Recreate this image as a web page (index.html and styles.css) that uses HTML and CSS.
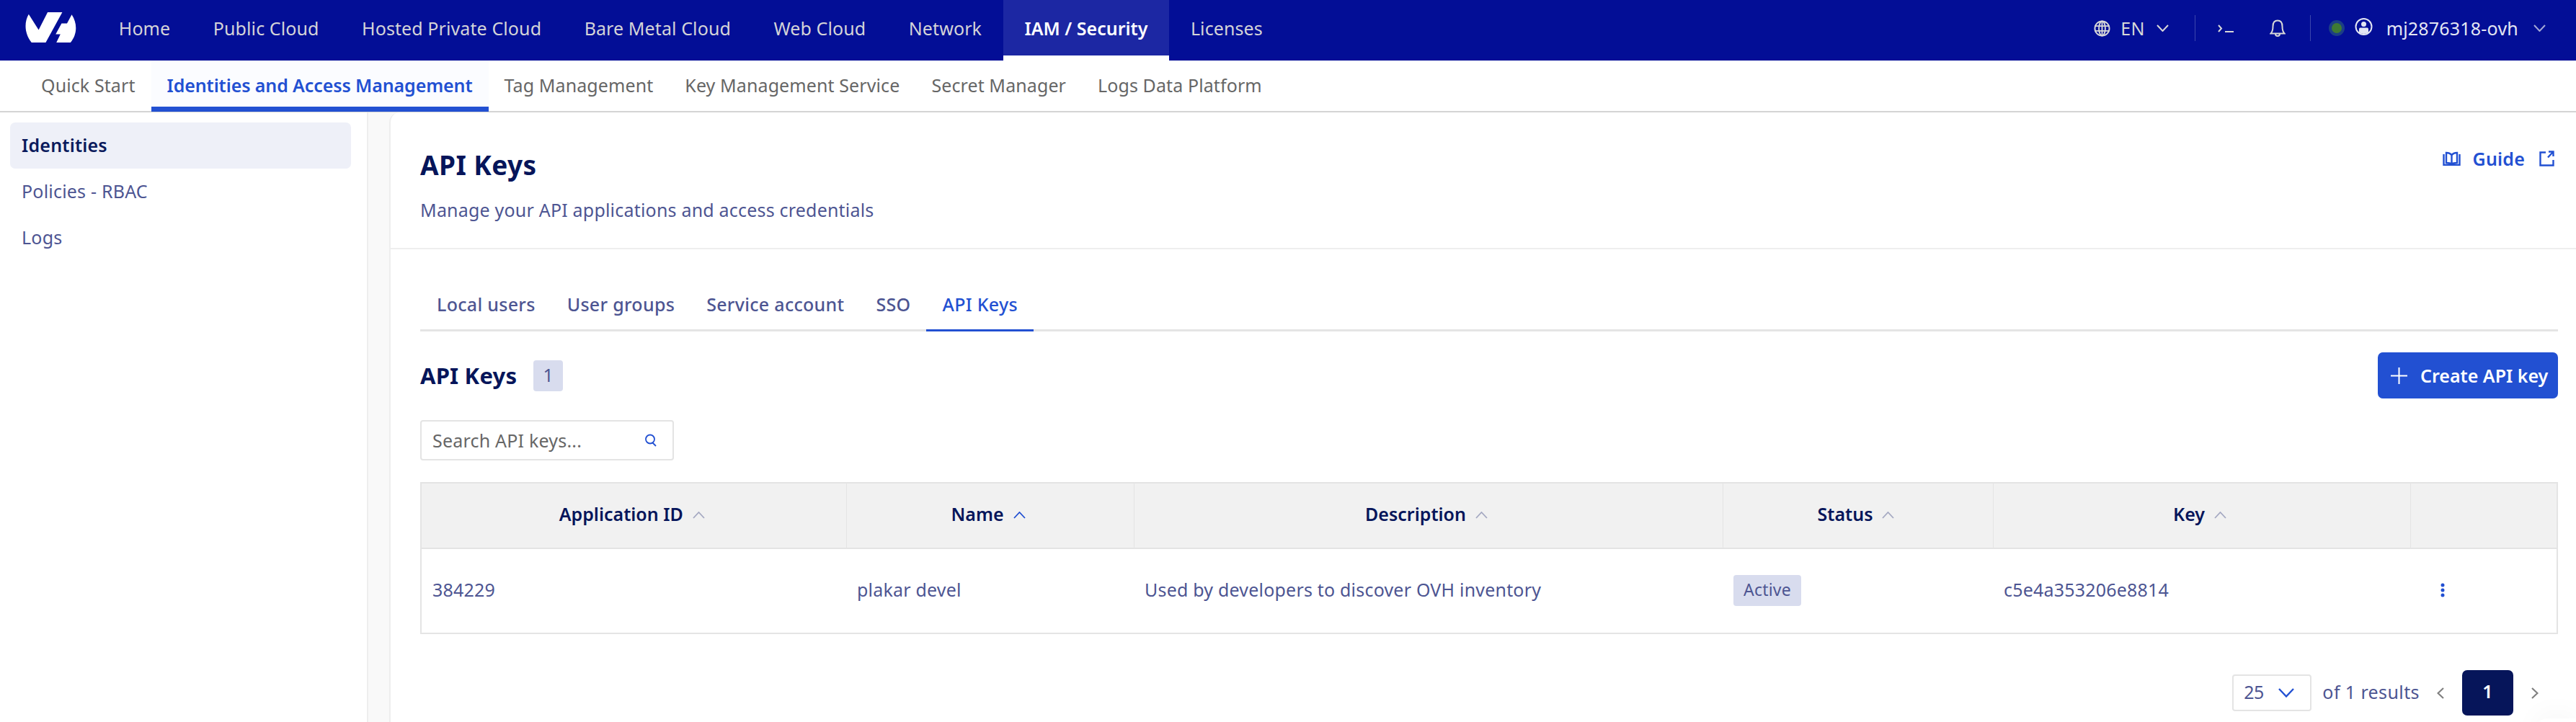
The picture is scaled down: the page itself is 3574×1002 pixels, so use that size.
FILE: index.html
```html
<!DOCTYPE html>
<html lang="en">
<head>
<meta charset="utf-8">
<title>API Keys</title>
<link rel="stylesheet" href="styles.css">
</head>
<body>
<header class="topbar">
  <svg class="logo" viewBox="105 50 213 128" fill="#fff"><path d="M118 58C98 92 100 140 130 178H190L260 50H198L160 125Z"/><path d="M235 178H295C322 145 326 100 300 60L280 97H257L232 143H252Z"/></svg>
  <nav class="topnav">
    <a class="topnav-item">Home</a>
    <a class="topnav-item">Public Cloud</a>
    <a class="topnav-item">Hosted Private Cloud</a>
    <a class="topnav-item">Bare Metal Cloud</a>
    <a class="topnav-item">Web Cloud</a>
    <a class="topnav-item">Network</a>
    <a class="topnav-item topnav-active">IAM / Security</a>
    <a class="topnav-item">Licenses</a>
  </nav>
  <div class="tools">
    <svg class="ico-globe" viewBox="0 0 24 24" fill="none" stroke="#d8d8d8" stroke-width="2"><circle cx="12" cy="12" r="10.5"/><ellipse cx="12" cy="12" rx="4.6" ry="10.5"/><path d="M1.5 8.5H22.5M1.5 15.5H22.5M12 1.5V22.5"/></svg>
    <span class="lang">EN</span>
    <svg class="chev-top chev-lang" viewBox="0 0 17 10" fill="none" stroke="#d8d8d8" stroke-width="2"><path d="M1 1L8.500 9L16 1"/></svg>
    <span class="tool-sep"></span>
    <svg class="ico-term" viewBox="0 0 22 11" fill="none" stroke="#d8d8d8" stroke-width="2"><path d="M1 1L5 5.500L1 10M10 10H22"/></svg>
    <svg class="ico-bell" viewBox="0 0 22 24" fill="none" stroke="#d8d8d8" stroke-width="2"><path d="M1.500 19.500C4 17 4.500 15 4.500 9.500C4.500 4.500 7 1.500 11 1.500S17.500 4.500 17.500 9.500C17.500 15 18 17 20.500 19.500ZM8 20C8 24 14 24 14 20"/></svg>
    <span class="tool-sep sep-2"></span>
    <span class="status-dot"></span>
    <svg class="ico-user" viewBox="0 0 25 24"><circle cx="12.500" cy="12" r="11" fill="none" stroke="#e3e6f3" stroke-width="2"/><circle cx="12.500" cy="8.500" r="3.500" fill="#e3e6f3"/><path d="M6 20V15.500C6 14 7 13.500 8 13.500H17C18 13.500 19 14 19 15.500V20C15 22.500 10 22.500 6 20Z" fill="#e3e6f3"/></svg>
    <span class="username">mj2876318-ovh</span>
    <svg class="chev-top chev-dim" viewBox="0 0 17 10" fill="none" stroke="#a4a9d6" stroke-width="2"><path d="M1 1L8.500 9L16 1"/></svg>
  </div>
</header>
<nav class="subnav">
  <a class="subnav-item">Quick Start</a>
  <a class="subnav-item subnav-active">Identities and Access Management</a>
  <a class="subnav-item">Tag Management</a>
  <a class="subnav-item">Key Management Service</a>
  <a class="subnav-item">Secret Manager</a>
  <a class="subnav-item">Logs Data Platform</a>
</nav>
<div class="layout">
  <aside class="sidebar">
    <a class="side-item side-active">Identities</a>
    <a class="side-item">Policies - RBAC</a>
    <a class="side-item">Logs</a>
  </aside>
  <main class="content">
    <section class="card">
      <div class="page-head">
        <div>
          <h1 class="page-title">API Keys</h1>
          <p class="page-sub">Manage your API applications and access credentials</p>
        </div>
        <a class="guide">
          <svg class="ico-book" viewBox="0 0 25 20" fill="none" stroke="#2250d2" stroke-width="2.400"><path d="M1.500 4V19H23.500V4M5 2C8 2 11 3 12.500 5.500C14 3 17 2 20 2V16C17 16 14 16.500 12.500 18C11 16.500 8 16 5 16ZM12.500 5.500V18"/></svg>
          <span class="guide-text">Guide</span>
          <svg class="ico-ext" viewBox="0 0 21 22" fill="none" stroke="#2250d2" stroke-width="2.400"><path d="M9 2.500H1.500V20.500H19.500V13M12 9.500L19.500 1.500M13 1.500H19.500V8"/></svg>
        </a>
      </div>
      <div class="panel">
        <div class="tabs">
          <a class="tab">Local users</a>
          <a class="tab">User groups</a>
          <a class="tab">Service account</a>
          <a class="tab">SSO</a>
          <a class="tab tab-active">API Keys</a>
        </div>
        <div class="list-head">
          <h2 class="list-title">API Keys</h2>
          <span class="count">1</span>
          <button class="btn-create">
            <svg class="ico-plus" viewBox="0 0 23 23" stroke="#fff" stroke-width="2"><path d="M11.500 0V23M0 11.500H23"/></svg>
            Create API key
          </button>
        </div>
        <div class="search">
          <span class="search-text">Search API keys...</span>
          <svg class="ico-search" viewBox="0 0 18 18" fill="none" stroke="#2250d2" stroke-width="1.800"><circle cx="8" cy="7.500" r="6"/><path d="M11.500 12.500L16 17"/></svg>
        </div>
        <table class="grid">
          <colgroup><col class="c1"><col class="c2"><col class="c3"><col class="c4"><col class="c5"><col class="c6"></colgroup>
          <thead>
            <tr>
              <th><span class="th-in">Application ID<svg class="sort" viewBox="0 0 17 10" fill="none" stroke="#a5a9c2" stroke-width="1.800"><path d="M1 9L8.500 1L16 9"/></svg></span></th>
              <th><span class="th-in">Name<svg class="sort" viewBox="0 0 17 10" fill="none" stroke="#2250d2" stroke-width="1.800"><path d="M1 9L8.500 1L16 9"/></svg></span></th>
              <th><span class="th-in">Description<svg class="sort" viewBox="0 0 17 10" fill="none" stroke="#a5a9c2" stroke-width="1.800"><path d="M1 9L8.500 1L16 9"/></svg></span></th>
              <th><span class="th-in">Status<svg class="sort" viewBox="0 0 17 10" fill="none" stroke="#a5a9c2" stroke-width="1.800"><path d="M1 9L8.500 1L16 9"/></svg></span></th>
              <th><span class="th-in">Key<svg class="sort" viewBox="0 0 17 10" fill="none" stroke="#a5a9c2" stroke-width="1.800"><path d="M1 9L8.500 1L16 9"/></svg></span></th>
              <th></th>
            </tr>
          </thead>
          <tbody>
            <tr>
              <td>384229</td>
              <td>plakar devel</td>
              <td>Used by developers to discover OVH inventory</td>
              <td class="cell-status"><span class="status">Active</span></td>
              <td>c5e4a353206e8814</td>
              <td class="cell-menu"><svg class="ico-dots" viewBox="0 0 6 20" fill="#2250d2"><circle cx="3" cy="3" r="2.500"/><circle cx="3" cy="10" r="2.500"/><circle cx="3" cy="17" r="2.500"/></svg></td>
            </tr>
          </tbody>
        </table>
        <div class="pager">
          <div class="pager-select"><span class="pager-num">25</span><svg class="chev-sel" viewBox="0 0 22 13" fill="none" stroke="#2250d2" stroke-width="2.400"><path d="M1 1L11 11.500L21 1"/></svg></div>
          <span class="pager-text">of 1 results</span>
          <svg class="pager-arrow" viewBox="0 0 10 16" fill="none" stroke="#808080" stroke-width="2.200"><path d="M9 1L1.500 8L9 15"/></svg>
          <span class="pager-page">1</span>
          <svg class="pager-arrow" viewBox="0 0 10 16" fill="none" stroke="#808080" stroke-width="2.200"><path d="M1 1L8.500 8L1 15"/></svg>
        </div>
      </div>
    </section>
  </main>
</div>
<div class="chat-peek"></div>
</body>
</html>
```
FILE: styles.css
```css
* { box-sizing: border-box; }
html, body { margin: 0; padding: 0; }
body {
  position: relative;
  height: 1002px;
  overflow: hidden;
  font-family: "Noto Sans", "Liberation Sans", sans-serif;
  font-size: 25px;
  letter-spacing: 0.2px;
  background: #fff;
  color: #4d5592;
}
a { display: block; }

.topbar { display: flex; align-items: flex-start; height: 84px; padding-left: 35px; background: #030e96; }
.logo { width: 71px; height: 42px; margin-top: 17px; flex: none; }
.topnav { display: flex; margin-left: 29px; }
.topnav-item { height: 84px; padding: 0 29.75px; line-height: 78px; color: #d4d4d8; letter-spacing: 0.1px; }
.topnav-active { height: 84px; background: #1c27a3; border-bottom: 7px solid #fff; color: #fff; font-weight: 600; letter-spacing: 0; }
.tools { display: flex; align-items: center; height: 78px; margin-left: auto; padding-right: 42px; color: #d8d8d8; }
.ico-globe { width: 23px; height: 23px; }
.lang { margin-left: 14px; }
.chev-top { width: 17px; height: 10px; margin-left: 18px; }
.chev-lang { margin-left: 16px; }
.tool-sep { width: 1px; height: 36px; margin-left: 36px; background: #3c46ad; }
.ico-term { width: 22px; height: 11px; margin-left: 31px; }
.ico-bell { width: 22px; height: 24px; margin-left: 50px; }
.sep-2 { margin-left: 34px; }
.status-dot { width: 22px; height: 22px; margin-left: 25px; border: 4px solid #1c3e86; border-radius: 50%; background: #3f7a33; }
.ico-user { width: 25px; height: 24px; margin-left: 14px; margin-top: -4px; }
.username { margin-left: 19px; color: #e3e6f3; }
.chev-dim { margin-left: 21px; }

.subnav { display: flex; height: 72px; padding-left: 35px; border-bottom: 2px solid #d4d4d4; }
.subnav-item { height: 71px; padding: 0 22px; line-height: 68px; color: #666; letter-spacing: 0.1px; }
.subnav-active { background: #fbfcff; border-bottom: 7px solid #2250d2; color: #2250d2; font-weight: 600; letter-spacing: -0.1px; }

.layout { display: flex; height: 846px; }
.sidebar { display: flex; flex-direction: column; gap: 0; width: 511px; padding: 14px 22px 0 14px; border-right: 2px solid #eee; background: #fff; }
.side-item { height: 64px; padding-left: 16px; line-height: 62px; color: #4d5592; }
.side-active { background: #eef0f8; border-radius: 7px; color: #0a1a5c; font-weight: 600; }
.content { flex: 1; padding-left: 29px; background: #f9f9f9; }
.card { height: 100%; background: #fff; border-left: 2px solid #eee; border-top-left-radius: 14px; }

.page-head { display: flex; justify-content: space-between; height: 190px; padding: 48px 30px 0 41px; border-bottom: 2px solid #eee; }
.page-title { margin: 0; font-size: 37px; font-weight: 700; letter-spacing: 0.4px; line-height: 50px; color: #06155a; }
.page-sub { margin: 20px 0 0; line-height: 34px; color: #4d5592; }
.guide { display: flex; align-items: center; height: 24px; margin-top: 4px; color: #2250d2; font-weight: 600; }
.ico-book { width: 25px; height: 20px; }
.guide-text { margin-left: 17px; }
.ico-ext { width: 21px; height: 22px; margin-left: 20px; }

.panel { padding: 0 25px 0 41px; }
.tabs { display: flex; height: 114px; padding: 50px 0 0 1px; border-bottom: 3px solid #e4e4e4; }
.tab { height: 64px; padding: 0 22px; line-height: 52px; color: #4d5592; font-weight: 500; letter-spacing: 0.3px; }
.tab-active { border-bottom: 3px solid #2250d2; color: #2250d2; }

.list-head { display: flex; align-items: center; height: 64px; margin-top: 29px; }
.list-title { margin: 0; font-size: 31px; font-weight: 700; color: #06155a; }
.count { width: 41px; height: 43px; margin-left: 23px; background: #d8dcee; border-radius: 4px; line-height: 41px; text-align: center; }
.btn-create { display: flex; align-items: center; height: 64px; width: 250px; margin-left: auto; padding: 0 0 0 18px; border: 0; border-radius: 7px; background: #2250d2; color: #fff; font: 600 25px "Noto Sans", sans-serif; white-space: nowrap; }
.ico-plus { width: 23px; height: 23px; margin-right: 18px; flex: none; }

.search { display: flex; justify-content: space-between; align-items: center; width: 352px; height: 56px; margin-top: 30px; padding: 0 21px 0 15px; border: 2px solid #e4e4e4; border-radius: 4px; }
.search-text { color: #666; }
.ico-search { width: 18px; height: 18px; }

.grid { width: 100%; margin-top: 30px; border: 2px solid #e4e4e4; border-collapse: collapse; table-layout: fixed; }
.c1 { width: 590px; }
.c2 { width: 399px; }
.c3 { width: 817px; }
.c4 { width: 375px; }
.c5 { width: 579px; }
th { height: 91px; padding: 0 5px 6px 0; background: #f1f1f1; border-right: 1px solid #e4e4e4; border-bottom: 2px solid #e4e4e4; font-weight: 600; color: #06155a; letter-spacing: 0; }
th:last-child { border-right: 0; }
.th-in { display: inline-flex; align-items: center; }
.sort { width: 17px; height: 10px; margin: 4px 0 0 13px; }
td { height: 118px; padding: 0 15px 5px; color: #4d5592; white-space: nowrap; }
.status { display: inline-block; height: 43px; padding: 0 14px; background: #d8dcee; border-radius: 4px; font-size: 23px; line-height: 41px; }
.cell-status { padding-bottom: 2px; }
.cell-menu { padding: 0 0 2px 42px; }
.ico-dots { display: block; width: 6px; height: 20px; }

.pager { display: flex; justify-content: flex-end; align-items: center; height: 63px; margin-top: 50px; padding-right: 27px; }
.pager-select { display: flex; align-items: center; justify-content: space-between; width: 110px; height: 51px; padding: 0 22px 0 14px; border: 2px solid #e4e4e4; border-radius: 4px; }
.pager-num { padding-bottom: 4px; letter-spacing: -0.6px; }
.chev-sel { width: 22px; height: 13px; }
.pager-text { margin: 0 24px 0 15px; padding-bottom: 4px; letter-spacing: 0.4px; }
.pager-arrow { width: 10px; height: 16px; }
.pager-page { width: 71px; height: 63px; margin: 0 25px; background: #06155a; border-radius: 7px; color: #fff; font-weight: 600; line-height: 58px; text-align: center; }

.chat-peek { position: absolute; right: 0; bottom: -20px; width: 54px; height: 25px; background: #fff; border-top-left-radius: 14px; box-shadow: 0 0 40px rgba(0, 0, 0, 0.06); }
```
